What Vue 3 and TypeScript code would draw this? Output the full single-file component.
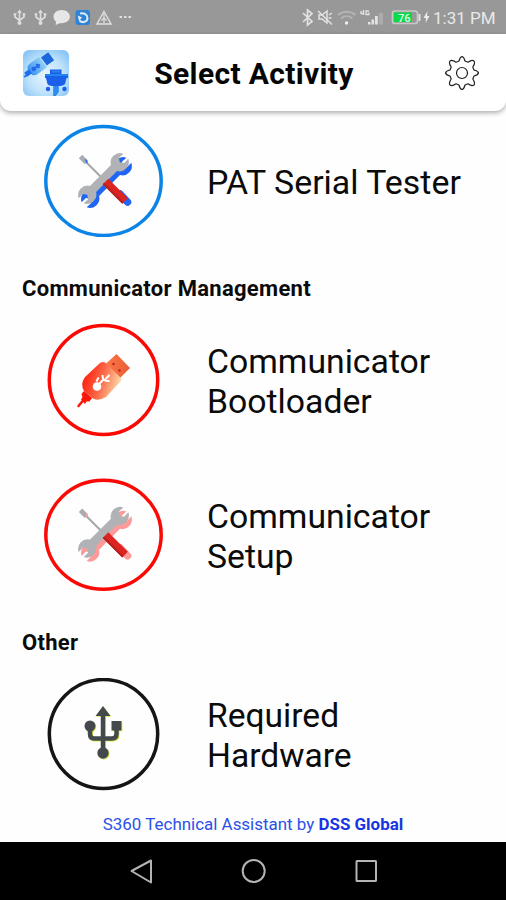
<script setup lang="ts">
type IconKind = 'tools' | 'cable' | 'usb'

interface Activity {
  lines: string[]
  icon: IconKind
  color: string
  rx: number
  cy: number
  shadow?: string
}

interface Section {
  title?: string
  items: Activity[]
}

const sections: Section[] = [
  { items: [{ lines: ['PAT Serial Tester'], icon: 'tools', color: '#0b84e8', rx: 57.7, cy: 66, shadow: '#1f66f5' }] },
  {
    title: 'Communicator Management',
    items: [
      { lines: ['Communicator', 'Bootloader'], icon: 'cable', color: '#fb0a05', rx: 54.2, cy: 65 },
      { lines: ['Communicator', 'Setup'], icon: 'tools', color: '#fb0a05', rx: 57.7, cy: 64.7, shadow: '#ff9a9a' },
    ],
  },
  { title: 'Other', items: [{ lines: ['Required', 'Hardware'], icon: 'usb', color: '#151515', rx: 54.2, cy: 64 }] },
]

const wrench =
  'M-14.8-4.3H14.8A9.5 9.5 0 0 1 31.6-3.5L25.5-3.7 23 0 25.5 3.7 31.6 3.5A9.5 9.5 0 0 1 14.8 4.3H-14.8A9.5 9.5 0 0 1-31.6 3.5L-25.5 3.7-23 0-25.5-3.7-31.6-3.5A9.5 9.5 0 0 1-14.8-4.3Z'
</script>

<template>
  <div class="screen">
    <div class="status">
      <svg class="status-left" viewBox="0 0 136 34" width="136" height="34">
        <g v-for="x in [19.5, 40.5]" :key="x" :transform="`translate(${x} 0)`" stroke="#dedede" fill="none" stroke-width="1.6">
          <path d="M0 11V24M-4.5 14V17L0 20.5 4.5 17V14" />
          <path d="M-2.4 13L0 9.5 2.4 13ZM-5.8 13.2H-3.2V15.4H-5.8ZM3.2 13.2H5.8V15.4H3.2Z" fill="#dedede" stroke="none" />
          <circle cy="23" r="2" fill="#dedede" stroke="none" />
        </g>
        <path d="M61.7 10c4.8 0 8.2 2.9 8.2 6.6s-3.4 6.6-8.2 6.6l-2 .1-4 1.8.3-3.4c-1.7-1.3-2.5-3-2.5-5.1 0-3.7 3.4-6.6 8.2-6.6Z" fill="#e6e6e6" />
        <rect x="75.5" y="10" width="14.5" height="15" rx="3" fill="#2e82d8" />
        <path d="M80 13.500c4-1 7.500 1 7.500 4.500 0 4-5 5.500-8 2.500" fill="none" stroke="#dcebf8" stroke-width="2" />
        <path d="M77.800 15.500l1.200 5.500 3-3.500Z" fill="#e5f0fa" />
        <path d="M104 11.500L111 24H97Z" fill="none" stroke="#e0e0e0" stroke-width="1.500" />
        <path d="M104 14V23M101.500 20.500L104 18l2.500 2.500" fill="none" stroke="#dcdcdc" stroke-width="1.300" />
        <path d="M119.500 16h2.500v2h-2.500ZM124 16h2.500v2H124ZM128.500 16h2.500v2h-2.500Z" fill="#e0e0e0" />
      </svg>
      <div class="status-right">
        <svg viewBox="300 0 133 34" width="133" height="34" fill="none" stroke="#e2e2e2">
          <path d="M303 13l9 8.500-4.500 3.500V10l4.500 3.500-9 8.500" stroke-width="1.700" />
          <path d="M319 15h3l5-4v12l-5-4h-3Z" stroke-width="1.500" />
          <path d="M318 11l14 13.500M329 15l3-2M328.500 18h3" stroke-width="1.500" />
          <g stroke="#b3b3b3" stroke-width="2">
            <path d="M338 15c5-4.500 12.500-4.500 17.500 0M341 18.500c3.500-3 8-3 11.500 0" />
          </g>
          <circle cx="346.500" cy="23" r="1.700" fill="#eee" stroke="none" />
          <path d="M361 11v2.500h2.500M363.500 10v5M369 11h-3v3.500h3v-2" stroke-width="1.300" />
          <path d="M368 22h2.500v2.500H368ZM371.500 19.500h2.500v5h-2.500ZM375 16h2.800v8.500H375Z" fill="#e5e5e5" stroke="none" />
          <path d="M379 13h4v11.500h-4Z" fill="#acacac" stroke="none" />
          <rect x="392.500" y="11" width="25" height="12.500" rx="2.500" stroke="#c8c8c8" stroke-width="1.700" />
          <rect x="394" y="12.500" width="18" height="9.500" fill="#05dc47" stroke="none" />
          <path d="M419.500 14v7" stroke-width="2" />
          <text x="398" y="21.500" class="battery">76</text>
          <path d="M427.500 11l-4 7h2.500l-.5 5 4-7H427Z" fill="#ececec" stroke="none" />
        </svg>
        <span class="time">1:31 PM</span>
      </div>
    </div>

    <header class="header">
      <svg class="logo" viewBox="0 0 46 46" width="46" height="46">
        <defs>
          <radialGradient id="logoBg" cx=".5" cy=".55" r=".7"><stop offset="0" stop-color="#e8f6ff" /><stop offset=".55" stop-color="#bfe3fb" /><stop offset="1" stop-color="#7fbff6" /></radialGradient>
          <linearGradient id="logoPlug"><stop offset="0" stop-color="#3d95ef" /><stop offset="1" stop-color="#8fd0f8" /></linearGradient>
        </defs>
        <rect width="46" height="46" rx="6" fill="url(#logoBg)" />
        <g transform="translate(14 16.500) rotate(-36)">
          <path d="M-9-4Q-7-6.500-4-6.500H7.500V6.500H-4Q-7 6.500-9 4Z" fill="url(#logoPlug)" />
          <rect x="8.500" y="-5" width="9" height="10" fill="#1a68dc" />
          <path d="M-14 0H-8" stroke="#1f6cec" stroke-width="5" />
          <path d="M-5 0H3.500M1-2.500V2.500" stroke="#2367ed" stroke-width="2" fill="none" />
          <circle cx="-4" r="2.300" fill="#2367ed" />
        </g>
        <path d="M1 27l3-2" stroke="#2471ee" stroke-width="2" />
        <path d="M27 19.500H38.500V24H45V28H43.500L42 34Q40 36 37 36H35.500V42L32.500 46H30.500V36Q26 36 24.500 34L23 28H22V24H27Z" fill="#1a60ea" />
        <path d="M30.500 36H35.500V42L32.500 46H30.500Z" fill="#2b8df0" />
        <path d="M29 20.500h8v2h-8Z" fill="#2f7fee" />
        <path d="M22 24h23v2H22Z" fill="#2485ee" />
        <circle cx="25" cy="39" r="2.200" fill="#1a60ea" /><circle cx="41.500" cy="39" r="2.200" fill="#1a60ea" />
      </svg>
      <h1>Select Activity</h1>
      <svg class="gear" viewBox="-18 -18 36 36" width="36" height="36" fill="none" stroke="#222" stroke-width="1.200" stroke-linejoin="round">
        <path d="M-3-12Q-2-16 0-16.500Q2-16 3-12L6-10.800Q10-13.500 12-12Q13.500-10 10.800-6L12-3Q16-2 16.500 0Q16 2 12 3L10.800 6Q13.500 10 12 12Q10 13.500 6 10.800L3 12Q2 16 0 16.500Q-2 16-3 12L-6 10.800Q-10 13.500-12 12Q-13.500 10-10.800 6L-12 3Q-16 2-16.500 0Q-16-2-12-3L-10.800-6Q-13.500-10-12-12Q-10-13.500-6-10.800Z" />
        <circle r="5.500" />
      </svg>
    </header>

    <main class="content">
      <section v-for="(section, i) in sections" :key="i">
        <h2 v-if="section.title">{{ section.title }}</h2>
        <div class="items">
          <div v-for="item in section.items" :key="item.lines.join(' ')" class="item">
            <svg viewBox="14 8 120 114" width="120" height="114">
              <ellipse cx="73.500" :cy="item.cy" :rx="item.rx" ry="54.500" fill="none" :stroke="item.color" stroke-width="3.500" />

              <g v-if="item.icon === 'tools'" :transform="`translate(0 ${item.cy - 66})`">
                <path :d="wrench" :fill="item.shadow" transform="translate(76.500 67.500) rotate(-45)" />
                <path d="M90 79l7.500 8" :stroke="item.shadow" stroke-width="7.500" stroke-linecap="round" />
                <path d="M54 45l18 18" stroke="#a5a5a8" stroke-width="2" />
                <path d="M50.500 41.500l6 6" stroke="#a9acb0" stroke-width="4.800" />
                <path d="M55.500 44.500l1.800 3.500" :stroke="item.shadow" stroke-width="1.500" />
                <path :d="wrench" fill="#b1b2b5" transform="translate(73.500 63.500) rotate(-45)" />
                <path d="M75.500 66.500L95 86" stroke="#dc2420" stroke-width="8" />
                <path d="M73.500 68.500L93 88" stroke="#b3231f" stroke-width="2" />
              </g>

              <g v-else-if="item.icon === 'cable'">
                <defs>
                  <linearGradient id="cableBody" x1="0" y1=".3" x2="1" y2=".6"><stop offset="0" stop-color="#ff1708" /><stop offset=".5" stop-color="#fb6847" /><stop offset="1" stop-color="#ffe2b0" /></linearGradient>
                  <linearGradient id="cableHead"><stop offset="0" stop-color="#ff7946" /><stop offset="1" stop-color="#e95b37" /></linearGradient>
                </defs>
                <path d="M86.500 39L100 53 90 63 75.500 49Z" fill="url(#cableHead)" />
                <path d="M70 48Q73 46 76 48L91 63Q92 65 90 67L76 82Q66 88 60 81L54 76Q50 69 55 62Z" fill="url(#cableBody)" />
                <path d="M48.500 91l5-6" stroke="#fb1608" stroke-width="2.500" stroke-linecap="round" />
                <path d="M54 76l8 7-2.500 3.500h-3l-1.500 2.500-4-4.500 1.500-2.500-1-3Z" fill="#fb1608" />
                <circle cx="83.500" cy="49" r="1.300" fill="#b52b20" /><circle cx="89.500" cy="55.500" r="1.300" fill="#b52b20" />
                <g fill="none" stroke="#fff" stroke-width="2">
                  <path d="M67 71l7-7M68.500 62.500l-2 4M72.500 60q-.5 6.500 7 6M75.500 64l4-4" />
                </g>
                <circle cx="67" cy="71.500" r="4.300" fill="#fff" />
              </g>

              <g v-else>
                <g v-for="layer in 2" :key="layer" :transform="layer === 1 ? 'translate(.8 .8)' : undefined" :fill="layer === 1 ? '#d8ec45' : '#44494b'" :stroke="layer === 1 ? '#d8ec45' : '#44494b'">
                  <path d="M73 44V83M60 56V64Q60 68.500 64 68.500H82Q86.500 68.500 86.500 64V57" fill="none" stroke-width="4.500" />
                  <path d="M73 36L80.500 46H65.500ZM81.500 51H91.500V60.500H81.500Z" stroke="none" />
                  <circle cx="60" cy="56" r="5.500" stroke="none" />
                  <circle cx="73" cy="83" r="5.700" stroke="none" />
                </g>
              </g>
            </svg>
            <p><span v-for="line in item.lines" :key="line">{{ line }}</span></p>
          </div>
        </div>
      </section>
      <footer><span>S360 Technical Assistant by <b>DSS Global</b></span></footer>
    </main>

    <nav class="nav">
      <svg viewBox="0 0 506 58" width="506" height="58" fill="none" stroke="#b4b4b4" stroke-width="2">
        <path d="M151 18.500V40.500L131.500 29Z" stroke-linejoin="round" />
        <circle cx="253.700" cy="29" r="11" />
        <rect x="356.500" y="19" width="19.500" height="20" rx=".5" />
      </svg>
    </nav>
  </div>
</template>

<style>
body { margin: 0; background: #fff; }
</style>

<style scoped>
.screen { display: flex; flex-direction: column; width: 506px; height: 900px; overflow: hidden; background: #fefefe; font-family: Roboto, "Liberation Sans", sans-serif; color: #0b0b0b; }
.status { display: flex; justify-content: space-between; flex: none; height: 34px; background: #989898; }
.status-right { display: flex; padding-right: 9px; }
.battery { font: 500 11px Roboto, sans-serif; fill: #e4ffe9; stroke: none; }
.time { width: 64px; line-height: 36px; font-size: 17px; color: #e9e9e9; white-space: nowrap; }
.header { display: flex; align-items: center; justify-content: space-between; box-sizing: border-box; flex: none; height: 77px; padding: 0 26px 0 23px; border-radius: 0 0 11px 11px; background: #fff; box-shadow: 0 2px 5px rgba(0, 0, 0, .32); }
h1 { margin: 2px 0 0; padding-right: 5px; font-size: 30px; letter-spacing: .35px; line-height: 36px; font-weight: 700; color: #060606; white-space: nowrap; }
.content { flex: 1; padding-top: 12px; }
h2 { margin: 0; padding-left: 22px; height: 86px; line-height: 103px; font-size: 22px; letter-spacing: .3px; font-weight: 700; white-space: nowrap; }
.items { display: flex; flex-direction: column; gap: 41px; }
.item { display: flex; align-items: center; height: 114px; padding-left: 44px; }
p { margin: 4px 0 0 43px; font-size: 33.75px; line-height: 40px; white-space: nowrap; }
p span { display: block; }
section:first-of-type .item p { margin-top: 6px; font-size: 33.9px; }
section:last-of-type .item p { margin-top: 2px; font-size: 33.6px; }
section:last-of-type h2 { line-height: 101px; }
footer { display: flex; justify-content: center; height: 48px; padding-top: 2px; line-height: 60px; font-size: 16.95px; color: #2a50e8; white-space: nowrap; }
footer b { color: #1736e2; }
.nav { flex: none; height: 58px; background: #000; }
</style>
